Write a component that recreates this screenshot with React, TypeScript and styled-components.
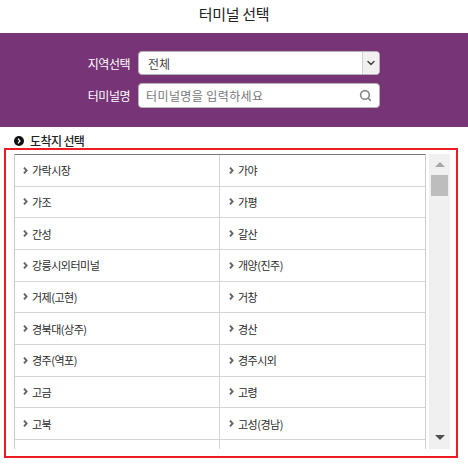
import React from 'react';
import styled, { createGlobalStyle } from 'styled-components';
import { ChevronDown, Search } from 'lucide-react';

const GlobalStyle = createGlobalStyle`
  html, body {
    margin: 0;
    padding: 0;
    background: #fff;
  }
  body {
    font-family: "Noto Sans CJK KR", "Noto Sans", sans-serif;
    color: #222;
  }
  * {
    box-sizing: border-box;
  }
`;

const Page = styled.div`
  width: 468px;
  height: 467px;
  overflow: hidden;
`;

const Title = styled.h1`
  margin: 0;
  height: 33px;
  font-size: 15px;
  font-weight: 400;
  line-height: 27px;
  letter-spacing: -0.3px;
  text-align: center;
  color: #222;
`;

const SearchBand = styled.div`
  height: 94px;
  background: #773578;
  padding: 18px 0 0 0;
  display: flex;
  flex-direction: column;
  gap: 8px;
`;

const FieldRow = styled.div`
  display: flex;
  align-items: center;
  gap: 8px;
`;

const FieldLabel = styled.label`
  width: 130px;
  text-align: right;
  font-size: 12px;
  letter-spacing: -0.5px;
  color: #fff;
`;

const FieldBox = styled.div<{ $tall?: boolean }>`
  width: 242px;
  height: ${({ $tall }) => ($tall ? '25px' : '24px')};
  background: #fff;
  border: 1px solid #b5b5b5;
  border-radius: 4px;
  display: flex;
  align-items: center;
  font-size: 12px;
  overflow: hidden;
`;

const SelectValue = styled.span`
  flex: 1;
  padding-left: 9px;
  color: #444;
`;

const SelectArrow = styled.span`
  width: 17px;
  height: 100%;
  border-left: 1px solid #d0d0d0;
  background: #f1f1f1;
  display: flex;
  align-items: center;
  justify-content: center;
  color: #444;
`;

const Placeholder = styled.span`
  flex: 1;
  padding-left: 7px;
  color: #777;
  letter-spacing: 0.4px;
`;

const SearchIcon = styled.span`
  width: 20px;
  display: flex;
  align-items: center;
  color: #888;
`;

const SectionTitle = styled.div`
  height: 21px;
  padding: 6px 0 0 14px;
  display: flex;
  align-items: center;
  gap: 6px;
  font-size: 12px;
  font-weight: 500;
  line-height: 14px;
  letter-spacing: -0.6px;
  color: #222;
`;

const Bullet = styled.span`
  width: 10px;
  height: 10px;
  border-radius: 50%;
  background: #111;
  display: flex;
  align-items: center;
  justify-content: center;
`;

const Frame = styled.div`
  margin-left: 4px;
  width: 454px;
  height: 310px;
  border: 2px solid #ed1c24;
  padding: 4px 6px 6px 8px;
  display: flex;
  gap: 3px;
`;

const ListClip = styled.div`
  width: 412px;
  height: 295px;
  overflow: hidden;
`;

const Grid = styled.div`
  display: grid;
  grid-template-columns: 204px 1fr;
  grid-auto-rows: 31.67px;
  border-top: 1px solid #777;
  border-left: 1px solid #ccc;
  border-right: 1px solid #ccc;
`;

const Cell = styled.div<{ $right?: boolean }>`
  display: flex;
  align-items: center;
  gap: 4px;
  padding-left: ${({ $right }) => ($right ? '9px' : '8px')};
  font-size: 11px;
  letter-spacing: -0.5px;
  color: #2b2b2b;
  border-bottom: 1px solid #d4d4d4;
  border-left: ${({ $right }) => ($right ? '1px solid #d4d4d4' : 'none')};
`;

const Scrollbar = styled.div`
  width: 21px;
  height: 295px;
  background: #f0f0f0;
  display: flex;
  flex-direction: column;
  align-items: center;
`;

const ArrowUp = styled.span`
  margin-top: 8px;
  width: 0;
  height: 0;
  border-left: 5px solid transparent;
  border-right: 5px solid transparent;
  border-bottom: 5px solid #a6a6a6;
`;

const Thumb = styled.div`
  margin-top: 8px;
  width: 17px;
  height: 21px;
  background: #bdbdbd;
`;

const ArrowDown = styled.span`
  margin-top: auto;
  margin-bottom: 9px;
  width: 0;
  height: 0;
  border-left: 5px solid transparent;
  border-right: 5px solid transparent;
  border-top: 5px solid #505050;
`;

const terminals = [
  '가락시장', '가야',
  '가조', '가평',
  '간성', '갈산',
  '강릉시외터미널', '개양(진주)',
  '거제(고현)', '거창',
  '경북대(상주)', '경산',
  '경주(역포)', '경주시외',
  '고금', '고령',
  '고북', '고성(경남)',
];

const RowArrow = () => (
  <svg width="5" height="7" viewBox="0 0 5 7">
    <path d="M1 0.6 L3.6 3.5 L1 6.4" fill="none" stroke="#666" strokeWidth="1.9" />
  </svg>
);

const App: React.FC = () => (
  <Page>
    <GlobalStyle />
    <Title>터미널 선택</Title>
    <SearchBand>
      <FieldRow>
        <FieldLabel>지역선택</FieldLabel>
        <FieldBox>
          <SelectValue>전체</SelectValue>
          <SelectArrow>
            <ChevronDown size={12} strokeWidth={3} />
          </SelectArrow>
        </FieldBox>
      </FieldRow>
      <FieldRow>
        <FieldLabel>터미널명</FieldLabel>
        <FieldBox $tall>
          <Placeholder>터미널명을 입력하세요</Placeholder>
          <SearchIcon>
            <Search size={13} strokeWidth={3} />
          </SearchIcon>
        </FieldBox>
      </FieldRow>
    </SearchBand>
    <SectionTitle>
      <Bullet>
        <svg width="4" height="6" viewBox="0 0 4 6">
          <path d="M1 0.6 L3 3 L1 5.4" fill="none" stroke="#fff" strokeWidth="1.2" />
        </svg>
      </Bullet>
      도착지 선택
    </SectionTitle>
    <Frame>
      <ListClip>
        <Grid>
          {terminals.map((name, i) => (
            <Cell key={name} $right={i % 2 === 1}>
              <RowArrow />
              {name}
            </Cell>
          ))}
          {/* next row is scrolled out of view, only its borders show */}
          <Cell />
          <Cell $right />
        </Grid>
      </ListClip>
      <Scrollbar>
        <ArrowUp />
        <Thumb />
        <ArrowDown />
      </Scrollbar>
    </Frame>
  </Page>
);

export default App;
